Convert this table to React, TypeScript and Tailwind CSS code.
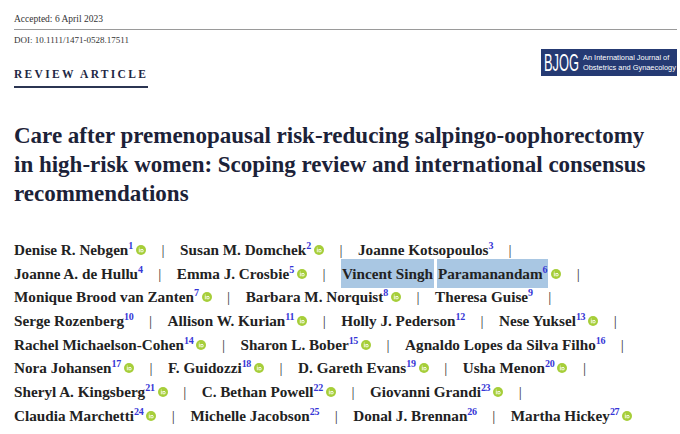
import React from "react";

type Author = {
  name: string;
  sup: number;
  orcid?: boolean;
  mark?: boolean;
};

const lines: Author[][] = [
  [
    { name: "Denise R. Nebgen", sup: 1, orcid: true },
    { name: "Susan M. Domchek", sup: 2, orcid: true },
    { name: "Joanne Kotsopoulos", sup: 3 },
  ],
  [
    { name: "Joanne A. de Hullu", sup: 4 },
    { name: "Emma J. Crosbie", sup: 5, orcid: true },
    { name: "Vincent Singh Paramanandam", sup: 6, orcid: true, mark: true },
  ],
  [
    { name: "Monique Brood van Zanten", sup: 7, orcid: true },
    { name: "Barbara M. Norquist", sup: 8, orcid: true },
    { name: "Theresa Guise", sup: 9 },
  ],
  [
    { name: "Serge Rozenberg", sup: 10 },
    { name: "Allison W. Kurian", sup: 11, orcid: true },
    { name: "Holly J. Pederson", sup: 12 },
    { name: "Nese Yuksel", sup: 13, orcid: true },
  ],
  [
    { name: "Rachel Michaelson-Cohen", sup: 14, orcid: true },
    { name: "Sharon L. Bober", sup: 15, orcid: true },
    { name: "Agnaldo Lopes da Silva Filho", sup: 16 },
  ],
  [
    { name: "Nora Johansen", sup: 17, orcid: true },
    { name: "F. Guidozzi", sup: 18, orcid: true },
    { name: "D. Gareth Evans", sup: 19, orcid: true },
    { name: "Usha Menon", sup: 20, orcid: true },
  ],
  [
    { name: "Sheryl A. Kingsberg", sup: 21, orcid: true },
    { name: "C. Bethan Powell", sup: 22, orcid: true },
    { name: "Giovanni Grandi", sup: 23, orcid: true },
  ],
  [
    { name: "Claudia Marchetti", sup: 24, orcid: true },
    { name: "Michelle Jacobson", sup: 25 },
    { name: "Donal J. Brennan", sup: 26 },
    { name: "Martha Hickey", sup: 27, orcid: true },
  ],
];

// ORCID iD badge
const Orcid = () => (
  <svg viewBox="0 0 20 20" className="ml-[3px] h-[10px] w-[10px] shrink-0">
    <circle cx="10" cy="10" r="10" fill="#a6ce39" />
    <rect x="5.6" y="8" width="1.7" height="6.6" fill="#fff" />
    <circle cx="6.45" cy="5.9" r="1.05" fill="#fff" />
    <path
      d="M9 8h2.6c2.2 0 3.5 1.4 3.5 3.3S13.8 14.6 11.6 14.6H9zM10.6 9.4v3.8h1c1.3 0 2-.8 2-1.9s-.7-1.9-2-1.9z"
      fill="#fff"
      fillRule="evenodd"
    />
  </svg>
);

const Sup = ({ n }: { n: number }) => (
  <sup className="relative -top-[6px] text-[10px] font-bold tracking-[-0.03em] text-[#3535d6]">
    {n}
  </sup>
);

const Bar = () => (
  <span className="mx-[15.5px] font-normal text-[#3a3a3a]">|</span>
);

const AuthorName = ({ a }: { a: Author }) => {
  if (a.mark) {
    const words = a.name.split(" ");
    return (
      <span className="flex items-center">
        <span className="bg-[#a9c7e3] px-[1px] py-[3px]">
          {words.slice(0, -1).join(" ")}
        </span>
        <span className="ml-[3px] bg-[#a9c7e3] px-[1px] py-[3px]">
          {words[words.length - 1]}
          <Sup n={a.sup} />
        </span>
        {a.orcid && <Orcid />}
      </span>
    );
  }
  return (
    <span className="flex items-center">
      <span>
        {a.name}
        <Sup n={a.sup} />
      </span>
      {a.orcid && <Orcid />}
    </span>
  );
};

// BJOG journal logo
const Logo = () => (
  <div className="mt-[3px] flex h-[27px] w-[136px] items-center whitespace-nowrap bg-[#253a73] pl-[2px]">
    <svg width="38" height="27" viewBox="0 0 38 27" className="shrink-0 overflow-visible">
      <text
        x="1"
        y="22"
        fill="#fff"
        fontFamily="Liberation Sans, sans-serif"
        fontSize="24"
        textLength="35"
        lengthAdjust="spacingAndGlyphs"
      >
        BJOG
      </text>
    </svg>
    <div className="ml-[2px] font-['Liberation_Sans',sans-serif] text-[7.4px] leading-[10px] text-white">
      <div>An International Journal of</div>
      <div>Obstetrics and Gynaecology</div>
    </div>
  </div>
);

export default function App() {
  return (
    <div className="h-[434px] w-[680px] overflow-hidden bg-white pl-[14px] font-['Liberation_Serif',serif] text-[#222]">
      {/* header */}
      <div className="pr-[3px] pt-[13px]">
        <div className="border-b-[1.5px] border-[#9a9a9a] pb-[4px] text-[9.5px] leading-[12px] text-[#333]">
          Accepted: 6 April 2023
        </div>
        <div className="pt-[4px] text-[9px] leading-[12px] text-[#333]">
          DOI: 10.1111/1471-0528.17511
        </div>
      </div>

      <div className="flex items-start justify-between pr-[3px]">
        <div className="pt-[21px]">
          <div className="border-b-2 border-[#2b3552] pb-[5px] text-[11.5px] font-semibold leading-[14px] tracking-[0.2em] text-[#1e2744]">
            REVIEW ARTICLE
          </div>
        </div>
        <Logo />
      </div>

      {/* title */}
      <h1 className="mt-[33px] text-[23px] font-bold leading-[29px] text-[#1c2238]">
        Care after premenopausal risk-reducing salpingo-oophorectomy
        <br />
        in high-risk women: Scoping review and international consensus
        <br />
        recommendations
      </h1>

      {/* authors */}
      <div className="mt-[30px] text-[15.2px] font-bold leading-[23.7px]">
        {lines.map((line, i) => (
          <div key={i} className="flex h-[23.7px] items-center whitespace-nowrap">
            {line.map((a, j) => (
              <React.Fragment key={a.name}>
                <AuthorName a={a} />
                {(j < line.length - 1 || i < lines.length - 1) && <Bar />}
              </React.Fragment>
            ))}
          </div>
        ))}
      </div>
    </div>
  );
}
